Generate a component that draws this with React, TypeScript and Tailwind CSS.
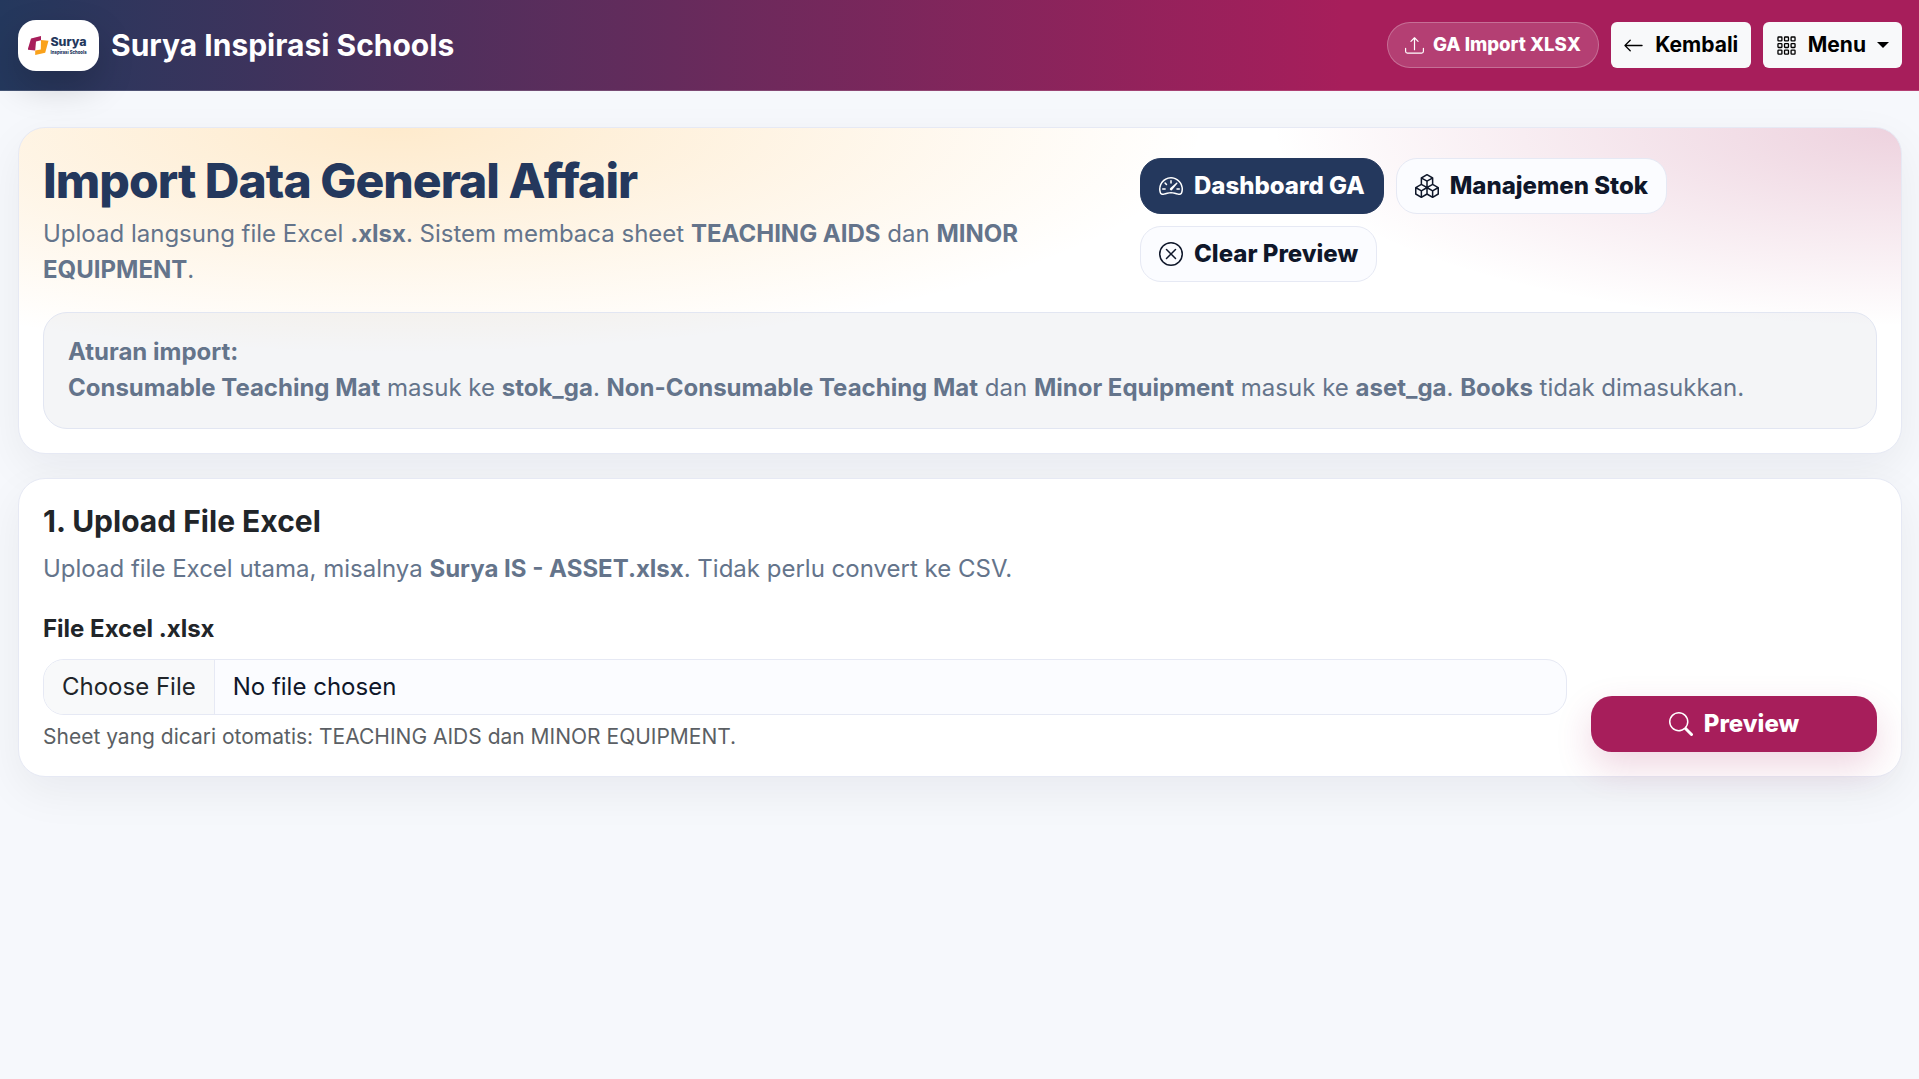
import type { ReactNode } from 'react';
import {
  BsArrowLeft,
  BsBoxes,
  BsGrid3X3Gap,
  BsSearch,
  BsSpeedometer2,
  BsUpload,
  BsXCircle,
} from 'react-icons/bs';

function Logo() {
  return (
    <div className="flex h-[51px] w-[81px] items-center justify-center rounded-[18px] bg-white shadow-[0_15px_36px_rgba(0,0,0,0.18)]">
      <svg width="61" height="31" viewBox="0 -5 61 31" role="img" aria-label="Surya Inspirasi Schools">
        <path d="M3 3.6 13 1v4.2l-5 1.4-.8 8.8-7.6-.6z" fill="#a71e5b" />
        <path d="M13 5l7.5.8-3.3 12L7.2 20v-4.6l5.6-.8z" fill="#faa21b" />
        <text x="22.4" y="11.2" fontFamily="Inter, sans-serif" fontSize="11.4" fontWeight="800" fill="#24385d" textLength="36.2" lengthAdjust="spacingAndGlyphs">
          Surya
        </text>
        <text x="22.6" y="18.8" fontFamily="Inter, sans-serif" fontSize="4.8" fontWeight="800" fill="#24385d" textLength="36" lengthAdjust="spacingAndGlyphs">
          Inspirasi Schools
        </text>
      </svg>
    </div>
  );
}

function Navbar() {
  return (
    <header className="flex h-[91px] items-center justify-between border-b border-white/15 bg-[linear-gradient(90deg,#24385d_0%,#a71e5b_70%)] pr-[17px] pl-[18px]">
      <div className="flex items-center gap-3">
        <Logo />
        <span className="text-[30px] leading-9 font-bold text-white">Surya Inspirasi Schools</span>
      </div>
      <div className="flex items-center gap-3">
        <span className="flex h-[46px] items-center gap-[9px] rounded-full border border-white/25 bg-white/15 px-[17px] text-[18.6px] font-extrabold text-white">
          <BsUpload className="size-[19px]" />
          GA Import XLSX
        </span>
        <button className="flex h-[46px] items-center gap-[11px] rounded-md bg-[#f8f9fa] px-[12.5px] text-[21px] font-bold text-black">
          <BsArrowLeft className="size-[21px]" />
          Kembali
        </button>
        <button className="flex h-[46px] items-center rounded-md bg-[#f8f9fa] px-[13px] text-[21px] font-bold text-black">
          <BsGrid3X3Gap className="mr-[11px] size-[21px]" />
          Menu
          <span className="ml-[11px] border-x-[6.5px] border-t-[6.5px] border-x-transparent border-t-black" />
        </button>
      </div>
    </header>
  );
}

function ActionButton({ icon, label, primary = false }: { icon: ReactNode; label: string; primary?: boolean }) {
  return (
    <button
      className={`flex h-14 items-center gap-[11px] rounded-[21px] border px-[18px] text-2xl font-extrabold ${
        primary ? 'border-[#24385d] bg-[#24385d] text-white' : 'border-[#e6e9f4] bg-[#fbfcff] text-[#0f172a]'
      }`}
    >
      {icon}
      {label}
    </button>
  );
}

function Card({ children, className = 'bg-white' }: { children: ReactNode; className?: string }) {
  return (
    <section
      className={`rounded-[27px] border border-[#e6e9f4] p-6 shadow-[0_15px_45px_rgba(15,23,42,0.06)] ${className}`}
    >
      {children}
    </section>
  );
}

function HeroCard() {
  return (
    <Card className="bg-white bg-[radial-gradient(1350px_375px_at_20%_0%,rgba(250,162,27,0.22),transparent_60%),radial-gradient(1050px_330px_at_100%_0%,rgba(167,30,91,0.2),transparent_60%)]">
      <div className="flex items-center justify-between">
        <div className="w-[1010px]">
          <h1 className="mb-1.5 text-[48px] leading-[57.6px] font-extrabold tracking-[-0.02em] text-[#24385d]">
            Import Data General Affair
          </h1>
          <p className="text-2xl leading-9 text-[#64748b]">
            Upload langsung file Excel <b>.xlsx</b>. Sistem membaca sheet <b>TEACHING AIDS</b> dan <b>MINOR EQUIPMENT</b>.
          </p>
        </div>
        <div className="flex w-[737px] flex-wrap gap-3">
          <ActionButton primary icon={<BsSpeedometer2 />} label="Dashboard GA" />
          <ActionButton icon={<BsBoxes />} label="Manajemen Stok" />
          <ActionButton icon={<BsXCircle />} label="Clear Preview" />
        </div>
      </div>
      <div className="mt-6 rounded-3xl border border-[#e2e6f2] bg-[#24385d]/5 px-6 pt-[21px] pb-[22px] text-2xl leading-9 text-[#64748b]">
        <b>Aturan import:</b>
        <br />
        <b>Consumable Teaching Mat</b> masuk ke <b>stok_ga</b>. <b>Non-Consumable Teaching Mat</b> dan{' '}
        <b>Minor Equipment</b> masuk ke <b>aset_ga</b>. <b>Books</b> tidak dimasukkan.
      </div>
    </Card>
  );
}

function UploadCard() {
  return (
    <Card>
      <h2 className="mb-3 text-[30px] leading-9 font-bold text-[#212529]">1. Upload File Excel</h2>
      <p className="mb-6 text-2xl leading-9 text-[#64748b]">
        Upload file Excel utama, misalnya <b>Surya IS - ASSET.xlsx</b>. Tidak perlu convert ke CSV.
      </p>
      <div className="flex items-end gap-6">
        <div className="flex-1">
          <div className="mb-3 text-2xl leading-9 font-bold text-[#212529]">File Excel .xlsx</div>
          <div className="flex h-14 overflow-hidden rounded-[21px] border border-[#e6e9f4] bg-[#fbfcff] text-2xl">
            <span className="flex items-center border-r border-[#e6e9f4] bg-[#f8f9fa] px-[18px] text-[#212529]">
              Choose File
            </span>
            <span className="flex items-center px-[18px] text-[#0f172a]">No file chosen</span>
          </div>
          <div className="mt-1.5 text-[21px] leading-[31.5px] text-[#5b5f64]">
            Sheet yang dicari otomatis: TEACHING AIDS dan MINOR EQUIPMENT.
          </div>
        </div>
        <button className="flex h-14 w-[286px] items-center justify-center gap-[11px] rounded-[21px] bg-[#a71e5b] text-2xl font-extrabold text-white shadow-[0_15px_36px_rgba(167,30,91,0.18)]">
          <BsSearch />
          Preview
        </button>
      </div>
    </Card>
  );
}

export default function App() {
  return (
    <div className="min-h-screen bg-[#f6f8fc] font-['Inter',sans-serif]">
      <Navbar />
      <main className="flex flex-col gap-6 pt-9 pr-[17px] pl-[18px]">
        <HeroCard />
        <UploadCard />
      </main>
    </div>
  );
}
